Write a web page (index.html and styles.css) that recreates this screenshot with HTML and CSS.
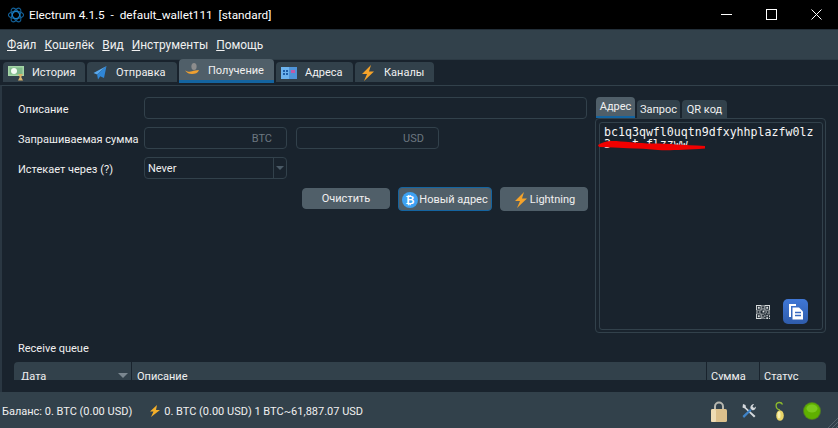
FILE: index.html
```html
<!DOCTYPE html>
<html lang="ru">
<head>
<meta charset="utf-8">
<title>Electrum</title>
<link rel="stylesheet" href="styles.css">
</head>
<body>
<div class="window">
  <header class="titlebar">
    <svg class="app-icon" viewBox="0 0 16 16"><g fill="none" stroke="#135f96" stroke-width="1.1"><ellipse cx="8" cy="8" rx="7.6" ry="3.6"/><ellipse cx="8" cy="8" rx="7.6" ry="3.6" transform="rotate(60 8 8)"/><ellipse cx="8" cy="8" rx="7.6" ry="3.6" transform="rotate(120 8 8)"/><circle cx="8" cy="8" r="3.6" stroke="#1b7ec4"/></g></svg>
    <span class="title">Electrum 4.1.5  -  default_wallet111  [standard]</span>
    <div class="controls">
      <span class="ctl"><svg viewBox="0 0 11 11" class="ctl-icon"><path d="M0 5.5h11" stroke="#fff"/></svg></span>
      <span class="ctl"><svg viewBox="0 0 11 11" class="ctl-icon"><rect x=".5" y=".5" width="10" height="10" fill="none" stroke="#fff"/></svg></span>
      <span class="ctl"><svg viewBox="0 0 11 11" class="ctl-icon"><path d="M.5.5l10 10M10.5.5l-10 10" stroke="#fff"/></svg></span>
    </div>
  </header>
  <nav class="menubar">
    <span><u>Ф</u>айл</span><span><u>К</u>ошелёк</span><span><u>В</u>ид</span><span><u>И</u>нструменты</span><span><u>П</u>омощь</span>
  </nav>
  <div class="tabs">
    <div class="tab t1">
      <svg class="tab-icon" viewBox="0 0 16 16"><rect y="1" width="16" height="10" fill="#a5d6a7"/><rect x="1.5" y="2.5" width="13" height="7" fill="#7fb98a"/><circle cx="6" cy="6" r="3" fill="#f4fbf4"/><path d="M10 9h5l-1.8 3 1.8 3.5h-5l1.8-3.5z" fill="#d9b36c"/></svg>
      История
    </div>
    <div class="tab t2">
      <svg class="tab-icon" viewBox="0 0 16 16"><path d="M14.5 1L1.5 8l3.6 1.6z" fill="#5aa9ec"/><path d="M14.5 1L5.1 9.6 6 14.5l2.2-3.3 3.8 1.7z" fill="#2f86d6"/></svg>
      Отправка
    </div>
    <div class="tab t3 selected">
      <svg class="tab-icon" viewBox="0 0 16 16"><ellipse cx="10" cy="4.500" rx="2.600" ry="3.500" fill="#8d8d8d"/><path d="M1 8.500c3 1.500 5 1.500 7 .8s4-.8 7-1.300c-1 3-4 4-7 4-3 0-5-1-7-3.500z" fill="#f0a030"/></svg>
      Получение
    </div>
    <div class="tab t4">
      <svg class="tab-icon" viewBox="0 0 16 16"><rect y="2" width="16" height="12" fill="#6db3ee"/><rect x="8" y="2" width="8" height="12" fill="#4f93d8"/><path d="M2 5h2v2H2zM5 5h2v2H5zM2 8h2v2H2zM5 8h2v2H5z" fill="#1f5fa8"/><rect x="10" y="5" width="4" height="3" fill="#c05aa8"/></svg>
      Адреса
    </div>
    <div class="tab t5">
      <svg class="tab-icon" viewBox="0 0 16 16"><path d="M11 0L2 9h5l-3 7 10-9.500H9z" fill="#f5a32a"/></svg>
      Каналы
    </div>
  </div>
  <main class="pane">
    <div class="top">
      <form class="form">
        <label class="lbl">Описание</label>
        <div class="field wide"></div>
        <label class="lbl">Запрашиваемая сумма</label>
        <div class="field unit">BTC</div>
        <div class="field unit">USD</div>
        <span class="spacer"></span>
        <label class="lbl">Истекает через (?)</label>
        <div class="field combo"><span class="combo-text">Never</span><span class="combo-btn"><i class="arrow"></i></span></div>
      </form>
      <div class="buttons">
        <button class="btn plain" type="button">Очистить</button>
        <button class="btn focus" type="button">
          <svg class="btn-icon" viewBox="0 0 16 16"><circle cx="8" cy="8" r="8" fill="#3ea2f2"/><text x="8" y="12" class="btc">₿</text></svg>Новый адрес
        </button>
        <button class="btn" type="button">
          <svg class="btn-icon" viewBox="0 0 16 16"><path d="M11 0L2 9h5l-3 7 10-9.500H9z" fill="#f5a32a"/></svg>Lightning
        </button>
      </div>
    </div>
    <aside class="side">
      <div class="side-tabs">
        <span class="stab s1 selected">Адрес</span><span class="stab s2">Запрос</span><span class="stab s3">QR код</span>
      </div>
      <div class="side-box">
        <div class="address">
          <div class="addr-text">bc1q3qwfl0uqtn9dfxyhhplazfw0lz<br>3&nbsp;&nbsp;&nbsp;t&nbsp;flzzww</div>
          <svg class="scribble" viewBox="0 0 108 11"><path d="M0 5C3 3 8 1 14 1C25 1 40 3.500 55 3.500C70 3.500 85 5 107 6L107 8.500C85 10 70 10.500 60 10C40 8 20 8 1 7Z" fill="#f00000"/></svg>
          <div class="addr-tools">
            <svg class="qr" viewBox="0 0 15 15"><g fill="#d8dcdc"><path d="M0 0h6v6H0zM1 1v4h4V1zM2 2h2v2H2zM9 0h6v6H9zM10 1v4h4V1zM11 2h2v2h-2zM0 9h6v6H0zM1 10v4h4v-4zM2 11h2v2H2z" fill-rule="evenodd"/><path d="M7 0h1v2H7zM7 3h1v2H7zM0 7h2v1H0zM3 7h2v1H3zM7 6h2v2H7zM10 7h2v1h-2zM13 7h2v1h-2zM7 9h1v2H7zM9 9h2v1H9zM12 9h3v1h-3zM9 11h1v2H9zM11 11h2v1h-2zM14 11h1v2h-1zM7 12h1v3H7zM11 13h2v2h-2zM9 14h1v1H9zM14 14h1v1h-1z"/></g></svg>
            <span class="copy"><svg viewBox="0 0 25 25"><path d="M6 5h7v2H8v11H6z" fill="#fff"/><path d="M9.500 8.500h6.500l4 4v8H9.500z" fill="#fff"/><path d="M12 13.500h6M12 16.500h6" stroke="#3768bf" stroke-width="1.500"/></svg></span>
          </div>
        </div>
      </div>
    </aside>
    <div class="queue-label">Receive queue</div>
    <div class="table-clip">
      <div class="thead">
        <span class="th date">Дата<i class="sort"></i></span>
        <span class="th desc">Описание</span>
        <span class="th sum">Сумма</span>
        <span class="th status">Статус</span>
      </div>
    </div>
  </main>
  <footer class="statusbar">
    <span class="bal">Баланс: 0. BTC (0.00 USD)</span>
    <svg class="bolt" viewBox="0 0 12 12"><path d="M8 0L1 6.500h3.500L2 12l9-7H7z" fill="#f5b02a"/></svg>
    <span>0. BTC (0.00 USD) 1 BTC~61,887.07 USD</span>
    <div class="st-icons">
      <svg class="st lock" viewBox="0 0 16 21"><path d="M4 9V5.500a4 4 0 0 1 8 0V9" fill="none" stroke="#b8b8b0" stroke-width="2"/><rect y="8" width="16" height="13" rx="1.500" fill="#dcc08c"/><rect y="8" width="5" height="13" rx="1.500" fill="#efdcb4"/></svg>
      <svg class="st tools" viewBox="0 0 16 16"><path d="M2 1l2.500 1 .5 2.500L14.500 13 13 14.500 3.800 5.500 1.500 4.500z" fill="#d4d8dc"/><path d="M1.500 13L9 6l1.500 1.500L3 15z" fill="#3f83c8"/><path d="M9.500 5.500c-.5-2 1-4.500 3.500-4.500l-1.500 2.500 1.500 1.500L15 3.500c0 3-2.500 4.500-4 3.500z" fill="#d4d8dc"/></svg>
      <svg class="st seed" viewBox="0 0 11 20"><path d="M6 9C1 8 1 2 5 1.500c2-.2 3 .8 3.500 2" fill="none" stroke="#8dbb2c" stroke-width="1.300"/><ellipse cx="6" cy="14.500" rx="3.800" ry="5.300" fill="#e8d468"/><ellipse cx="5" cy="14" rx="1.500" ry="3.500" fill="#f8f0b0"/></svg>
      <svg class="st dot" viewBox="0 0 18 18"><circle cx="9" cy="9" r="9" fill="#4f7d22"/><circle cx="9" cy="9" r="8" fill="#5fb000"/><ellipse cx="9" cy="6.500" rx="5.500" ry="4" fill="#7ac81c"/></svg>
    </div>
    <svg class="grip" viewBox="0 0 12 12"><path d="M12 2L2 12M12 6l-6 6M12 10l-2 2" stroke="#55626c"/></svg>
  </footer>
</div>
</body>
</html>
```

FILE: styles.css
```css
* { box-sizing: border-box; }
html, body { margin: 0; padding: 0; }
body { width: 838px; height: 428px; overflow: hidden; background: #19232d; }
.window {
  width: 838px; height: 428px; display: flex; flex-direction: column;
  font-family: Roboto, "Noto Sans", sans-serif; font-size: 11px; color: #f0f0f0;
}

.titlebar { height: 29px; flex: none; background: #000; display: flex; align-items: center; padding-left: 8px; }
.app-icon { width: 16px; height: 16px; margin-right: 5px; }
.title { color: #fff; font-size: 11.8px; white-space: pre; }
.controls { margin-left: auto; display: flex; }
.ctl { width: 45px; height: 29px; padding-left: 2px; display: flex; align-items: center; justify-content: center; }
.ctl-icon { width: 11px; height: 11px; display: block; }

.menubar { height: 30px; flex: none; background: #32414b; border-top: 1px solid #232f39; display: flex; align-items: center; gap: 8px; padding-left: 7px; font-size: 11.9px; }

.tabs { height: 25px; flex: none; display: flex; align-items: flex-end; gap: 2px; padding: 0 0 2px 3px; background: #19232d; border-top: 1px solid #2c3a44; }
.tab { height: 20px; display: flex; align-items: center; padding: 1px 0 0 5px; background: #32414b; border-radius: 4px 4px 0 0; }
.t1 { width: 82px; }
.t2 { width: 90px; }
.t3 { width: 95px; }
.t4 { width: 77px; }
.t5 { width: 79px; }
.tab-icon { width: 16px; height: 16px; margin-right: 8px; flex: none; }
.tab.selected { height: 24px; margin-bottom: -1px; background: #505f69; border-bottom: 3px solid #1464a0; }

.pane { flex: 1; position: relative; min-height: 0; display: grid; grid-template-columns: 572px 231px; grid-template-rows: 236px 29px 18px; column-gap: 7px; padding: 11px 12px 0 14px; border-top: 1px solid #32414b; border-left: 2px solid #2a3742; overflow: hidden; margin-top: 1px; }

.top { grid-column: 1; grid-row: 1; }
.form { display: grid; grid-template-columns: 128px 143px 143px 1fr; grid-auto-rows: 22px; row-gap: 8px; align-items: center; }
.lbl { padding: 3px 0 0 2px; white-space: nowrap; }
.field { height: 22px; border: 1px solid #32414b; border-radius: 4px; background: #19232d; }
.wide { grid-column: 2 / 5; margin-right: 1px; }
.unit { display: flex; align-items: center; justify-content: flex-end; padding: 1px 14px 0 0; color: #6c7780; }
.unit + .unit { margin-left: 9px; width: 143px; }
.spacer { display: block; }
.combo { grid-column: 2; display: flex; align-items: stretch; }
.combo-text { flex: 1; padding-left: 3px; line-height: 22px; }
.combo-btn { width: 13px; border-left: 1px solid #32414b; display: flex; align-items: center; justify-content: center; }
.arrow { width: 0; height: 0; border: 4px solid transparent; border-top: 4px solid #4a5a66; border-bottom: 0; }

.buttons { display: flex; justify-content: flex-end; align-items: center; gap: 8px; margin-top: 8px; }
.btn { height: 24px; border: 1px solid #505f69; border-radius: 4px; background: #505f69; color: #f0f0f0; font: inherit; padding: 1px 0 0; display: flex; align-items: center; justify-content: center; width: 88px; }
.btn.plain { height: 21px; margin-top: -2px; }
.btn.focus { border-color: #1464a0; width: 94px; }
.btn-icon { width: 16px; height: 16px; margin-right: 1px; flex: none; }
.btc { font: bold 11px "DejaVu Sans", sans-serif; fill: #fff; text-anchor: middle; }

.side { grid-column: 2; grid-row: 1; display: flex; flex-direction: column; }
.side-tabs { height: 21px; flex: none; display: flex; align-items: flex-end; gap: 2px; padding-left: 1px; }
.stab { height: 18px; display: flex; align-items: center; justify-content: center; background: #32414b; border-radius: 4px 4px 0 0; }
.s1 { width: 39px; }
.s2 { width: 43px; }
.s3 { width: 45px; }
.stab.selected { height: 21px; background: #505f69; border-bottom: 2px solid #1464a0; }
.side-box { height: 215px; border: 1px solid #32414b; border-radius: 4px; padding: 3px 3px 2px; }
.address { position: relative; height: 100%; width: 224px; border: 1px solid #32414b; border-radius: 3px; padding: 3px 4px; }
.addr-text { font-family: "DejaVu Sans Mono", monospace; font-size: 11.6px; line-height: 12px; white-space: nowrap; color: #f6f6f6; }
.scribble { position: absolute; left: -2px; top: 17px; width: 108px; height: 11px; }
.addr-tools { position: absolute; right: 14px; bottom: 5px; display: flex; align-items: center; gap: 13px; }
.qr { width: 14px; height: 14px; display: block; }
.copy { width: 25px; height: 25px; border-radius: 5px; background: linear-gradient(#3f77d6, #2f5cab); display: block; }
.copy svg { display: block; width: 25px; height: 25px; }

.queue-label { grid-column: 1 / 3; grid-row: 2; padding: 9px 0 0 2px; }
.table-clip { grid-column: 1 / 3; grid-row: 3; height: 18px; overflow: hidden; width: 812px; margin-left: -2px; }
.thead { height: 30px; background: #32414b; border-radius: 4px 4px 0 0; display: flex; }
.th { position: relative; padding: 8px 0 0 5px; border-right: 1px solid #19232d; flex: none; height: 30px; }
.date { width: 118px; padding-left: 7px; }
.desc { width: 575px; padding-left: 5px; }
.sum { width: 53px; padding-left: 4px; }
.status { flex: 1; border-right: 0; padding-left: 4px; }
.sort { position: absolute; right: 3px; top: 11px; width: 0; height: 0; border: 5px solid transparent; border-top: 5px solid #7b8790; border-bottom: 0; }

.statusbar { height: 36px; flex: none; position: relative; background: #32414b; display: flex; align-items: center; padding: 2px 0 0 2px; }
.bal { margin-right: 17px; }
.bolt { width: 12px; height: 12px; margin-right: 3px; flex: none; }
.st-icons { margin-left: auto; margin-right: 17px; display: flex; align-items: center; }
.st { display: block; flex: none; }
.lock { width: 16px; height: 21px; margin-right: 14px; }
.tools { width: 16px; height: 16px; margin-right: 17px; }
.seed { width: 11px; height: 20px; margin-right: 18px; }
.dot { width: 18px; height: 18px; }
.grip { position: absolute; right: 0; bottom: 0; width: 12px; height: 12px; }
```
